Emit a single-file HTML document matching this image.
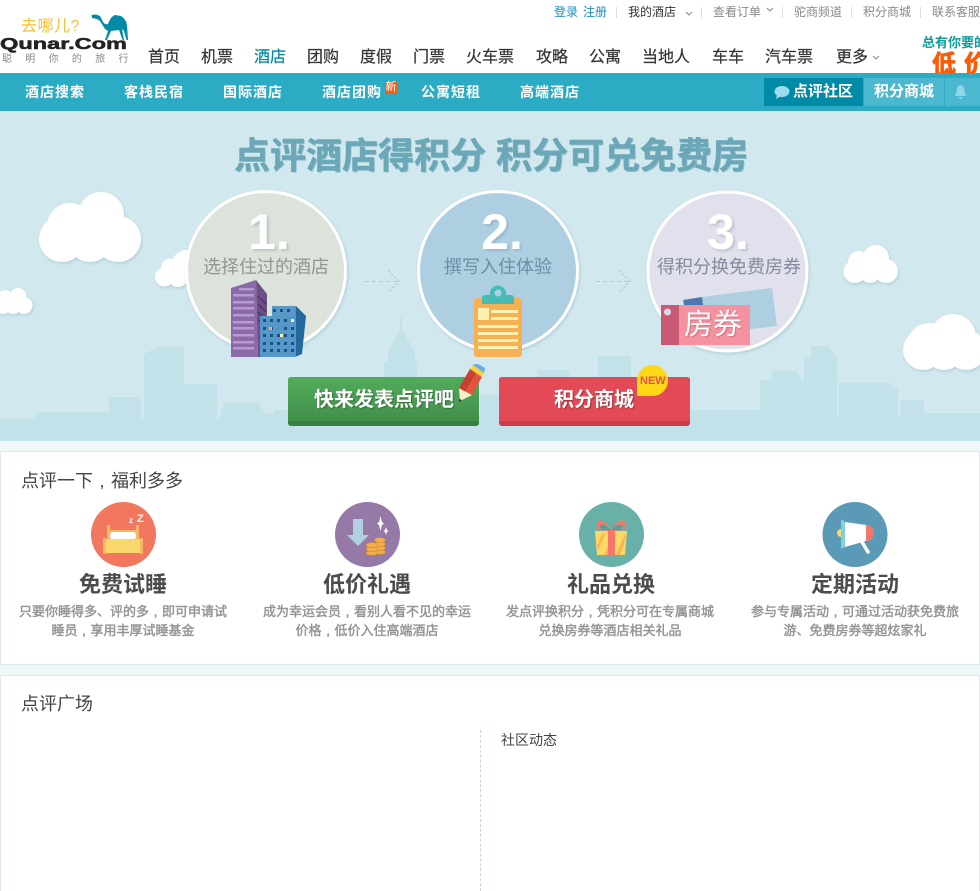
<!DOCTYPE html>
<html lang="zh"><head><meta charset="utf-8"><title>点评酒店</title>
<style>
html,body{margin:0;padding:0;background:#f0f7f9;width:980px;height:891px;overflow:hidden}
#w{position:relative;width:980px;height:891px;overflow:hidden;font-family:"Liberation Sans","WenQuanYi Zen Hei","Noto Sans CJK SC",sans-serif}
.t{position:absolute;white-space:nowrap}
.c{text-align:center}
.n{font-family:"Liberation Sans","Noto Sans CJK SC",sans-serif}
.top{top:5px;font-size:12px;line-height:14px;color:#888}
.sep{position:absolute;top:7px;width:1px;height:11px;background:#ddd}
.nav{top:48px;font-size:16px;line-height:20px;color:#333;font-family:"Liberation Sans","Noto Sans CJK SC",sans-serif;-webkit-text-stroke:.2px #333}
.sub{top:83px;font-size:14px;line-height:18px;color:#fff;font-weight:bold;letter-spacing:1px}
.step{font-size:18px;line-height:24px;top:255px}
.num{font-size:50px;line-height:50px;top:207px;font-weight:bold;color:#fff;text-shadow:2px 2px 2px rgba(120,130,150,.3)}
.h{top:572px;font-size:22px;line-height:26px;font-weight:bold;color:#4c4c4c;width:240px;font-family:"Liberation Sans","Noto Sans CJK SC",sans-serif}
.d{top:602px;font-size:13px;line-height:19px;color:#959595;width:240px;font-family:"Liberation Sans","Noto Sans CJK SC",sans-serif;-webkit-text-stroke:.45px #959595}
.cm{display:inline-block;width:1em;text-align:center}
.panel{position:absolute;left:0;width:978px;background:#fff;border:1px solid #dceaee}
</style></head><body><div id="w">
<div style="position:absolute;left:0;top:0;width:980px;height:73px;background:#fff"></div>

<!-- logo -->
<div class="t" style="left:21px;top:16px;font-size:16px;line-height:22px;color:#fbbf2d;letter-spacing:.5px">去哪儿?</div>
<svg style="position:absolute;left:85px;top:10px" width="50" height="45"><path d="M6.500 5 L11 4.500 L15 6 L18 12 Q20 15 23 14 Q26 6 30 5 L36 6 Q41 9 42 15 L43 30 L41.500 30 L39 21 L37 19 L39 30 L37.500 30 L34 20 L26 21 L22 30 L20 30 L23 21 L20 19 L15 11 L12 9 L7 8 Z" fill="#028aa6"/></svg>
<div class="t" style="left:0;top:34px;font-size:15.500px;line-height:22px;font-weight:bold;color:#222;transform-origin:0 0;transform:scaleX(1.52);-webkit-text-stroke:.5px #222">Qunar.Com</div>
<div class="t" style="left:2px;top:54px;font-size:10px;line-height:12px;color:#888;letter-spacing:13.300px">聪明你的旅行</div>

<!-- top links -->
<div class="t top" style="left:554px;color:#1a8dc0">登录</div>
<div class="t top" style="left:583px;color:#1a8dc0">注册</div>
<div class="sep" style="left:616px"></div>
<div class="t top" style="left:628px;color:#333">我的酒店</div>
<svg style="position:absolute;left:685px;top:11px" width="8" height="6"><path d="M1 1 L4 4 L7 1" fill="none" stroke="#888"/></svg>
<div class="sep" style="left:701px"></div>
<div class="t top" style="left:713px">查看订单</div>
<svg style="position:absolute;left:766px;top:7px" width="8" height="6"><path d="M1 1 L4 4 L7 1" fill="none" stroke="#888"/></svg>
<div class="sep" style="left:782px"></div>
<div class="t top" style="left:794px">驼商频道</div>
<div class="sep" style="left:851px"></div>
<div class="t top" style="left:863px">积分商城</div>
<div class="sep" style="left:920px"></div>
<div class="t top" style="left:932px">联系客服</div>

<!-- nav -->
<div class="t nav" style="left:148px">首页</div>
<div class="t nav" style="left:201px">机票</div>
<div class="t nav" style="left:254px;color:#028aa6;-webkit-text-stroke-color:#028aa6">酒店</div>
<div class="t nav" style="left:307px">团购</div>
<div class="t nav" style="left:360px">度假</div>
<div class="t nav" style="left:413px">门票</div>
<div class="t nav" style="left:466px">火车票</div>
<div class="t nav" style="left:536px">攻略</div>
<div class="t nav" style="left:589px">公寓</div>
<div class="t nav" style="left:642px">当地人</div>
<div class="t nav" style="left:712px">车车</div>
<div class="t nav" style="left:765px">汽车票</div>
<div class="t nav" style="left:836px">更多</div>
<svg style="position:absolute;left:872px;top:55px" width="8" height="6"><path d="M1 1 L4 4 L7 1" fill="none" stroke="#888"/></svg>

<!-- ad -->
<div style="position:absolute;left:900px;top:30px;width:80px;height:43px;overflow:hidden">
<div class="t" style="left:22px;top:5px;font-size:13px;line-height:16px;color:#119c9c;font-weight:bold">总有你要的</div>
<div class="t n" style="left:32px;top:20px;font-size:24px;line-height:30px;color:#fb5c05;font-weight:bold;letter-spacing:8px;-webkit-text-stroke:.8px #fb5c05">低价</div>
</div>

<!-- subnav -->
<div style="position:absolute;left:0;top:73px;width:980px;height:38px;background:#2babc4"></div>
<div class="t sub" style="left:25px">酒店搜索</div>
<div class="t sub" style="left:124px">客栈民宿</div>
<div class="t sub" style="left:223px">国际酒店</div>
<div class="t sub" style="left:322px">酒店团购</div>
<div class="t" style="left:385px;top:81px;width:12px;height:13px;background:#f2600a;color:#fff;font-size:11px;line-height:13px;text-align:center">新</div>
<div class="t sub" style="left:421px">公寓短租</div>
<div class="t sub" style="left:520px">高端酒店</div>
<div style="position:absolute;left:764px;top:78px;width:99px;height:28px;background:#008aa6"></div>
<div style="position:absolute;left:864px;top:78px;width:80px;height:28px;background:#4cb8d0"></div>
<div style="position:absolute;left:945px;top:78px;width:35px;height:28px;background:#4cb8d0"></div>
<svg style="position:absolute;left:773px;top:84px" width="18" height="16"><ellipse cx="9" cy="7.500" rx="7.500" ry="5.500" fill="#9ddcee"/><path d="M4 11 L3 15 L8 12 Z" fill="#9ddcee"/></svg>
<div class="t" style="left:793px;top:83px;font-size:15px;line-height:18px;color:#fff;font-weight:bold">点评社区</div>
<div class="t" style="left:874px;top:83px;font-size:15px;line-height:18px;color:#fff;font-weight:bold">积分商城</div>
<svg style="position:absolute;left:953px;top:84px" width="15" height="16"><path d="M7.500 1 Q11.500 2 11.500 7 Q11.500 10 13.500 12 L1.500 12 Q3.500 10 3.500 7 Q3.500 2 7.500 1 Z M5.500 13 H9.500 Q9 15 7.500 15 Q6 15 5.500 13 Z" fill="#8fd6e6"/></svg>

<!-- hero -->
<svg style="position:absolute;left:0;top:0" width="980" height="441" viewBox="0 0 980 441">
<defs><filter id="s" x="-10%" y="-10%" width="120%" height="125%"><feDropShadow dx="1" dy="1.500" stdDeviation="1.500" flood-color="#7fa7b5" flood-opacity=".4"/></filter>
<linearGradient id="g" x1="0" y1="0" x2="0" y2="1"><stop offset="0" stop-color="#52ab5c"/><stop offset="1" stop-color="#429049"/></linearGradient></defs>
<rect x="0" y="111" width="980" height="330" fill="#d2e8ef"/>
<path fill="#c2e1e8" d="M0 419 H36 V412 H109 V397 H141 V419 H144 V354 L158 347 H184 V384 H217 V419 H219 L224 403 H258 L265 413 H274 V410 H300 V416 H384 V362 H388 V352 L400 330 V318 H402 V330 L415 352 V362 H417 V416 H480 V395 H499 V395 H538 V370 H570 V395 H598 V356 H631 V395 H690 V410 H760 V380 H772 V371 H795 L804 382 V357 H811 V346 H828 L837 357 V418 H839 V383 H891 V387 H898 V418 H900 V400 H924 V413 H980 V441 H0 Z"/>
<!-- clouds -->
<g fill="#fff" filter="url(#s)">
<g><circle cx="62" cy="239" r="23"/><circle cx="90" cy="240" r="22"/><circle cx="118" cy="239" r="23"/><circle cx="101" cy="215" r="23"/><circle cx="70" cy="226" r="23"/></g>
<g><circle cx="3" cy="305.500" r="8.500"/><circle cx="13" cy="305.500" r="8.500"/><circle cx="24" cy="305.500" r="8.500"/><circle cx="18" cy="296.500" r="8.500"/><circle cx="5" cy="298" r="8"/></g>
<g><circle cx="164.500" cy="277" r="9.500"/><circle cx="178" cy="277" r="10"/><circle cx="170" cy="267" r="8.500"/><circle cx="186" cy="264" r="14"/></g>
<g><circle cx="855" cy="271.500" r="11.500"/><circle cx="870" cy="272" r="11"/><circle cx="886" cy="271" r="12"/><circle cx="859" cy="262" r="11"/><circle cx="876" cy="258" r="13"/></g>
<g><circle cx="923" cy="350" r="20"/><circle cx="944" cy="350" r="20"/><circle cx="966" cy="350" r="20"/><circle cx="929" cy="345" r="22"/><circle cx="953" cy="337" r="23"/></g>
</g>
<!-- circles -->
<g filter="url(#s)" stroke="#fff" stroke-width="3">
<circle cx="266" cy="271" r="79.500" fill="#dbe3da"/>
<circle cx="498" cy="271" r="79.500" fill="#aecfe2"/>
<circle cx="727.500" cy="271.500" r="79.500" fill="#e0e1ec"/>
</g>
<!-- arrows -->
<g fill="none" stroke="#a9cdd3" stroke-width="1">
<path d="M365 281.500 H398" stroke-dasharray="4 3"/><path d="M388 270 L399 281.500 L388 293" stroke-dasharray="3 1.500"/>
<path d="M596 281.500 H629" stroke-dasharray="4 3"/><path d="M619 270 L630 281.500 L619 293" stroke-dasharray="3 1.500"/>
</g>
<!-- buildings -->
<path d="M231 288 L256 280 L258 357 H231 Z" fill="#8a6aa8"/>
<path d="M256 280 L267 294 V357 H258 Z" fill="#6b4f86"/>
<g fill="#b79ccb"><rect x="239" y="288" width="15" height="2.500"/><rect x="233" y="294" width="21" height="2.500"/><rect x="233" y="301" width="21" height="2.500"/><rect x="233" y="307" width="21" height="2.500"/><rect x="233" y="314" width="21" height="2.500"/><rect x="233" y="321" width="21" height="2.500"/><rect x="233" y="327" width="21" height="2.500"/><rect x="233" y="334" width="21" height="2.500"/><rect x="233" y="341" width="21" height="2.500"/><rect x="233" y="347" width="21" height="2.500"/></g>
<path d="M258 296 L266 304 M258 304 L266 312 M258 312 L266 320 M258 320 L266 326" stroke="#4d3866" stroke-width="1.500"/>
<path d="M272 306 H296 V317 H272 Z" fill="#5a98c6"/>
<path d="M296 306 L306 316 L302 354 L295 357 Z" fill="#22689c"/>
<path d="M260 316 H296 V357 H260 Z" fill="#5598c8"/>
<g fill="#1d4f8b">
<path d="M263 319h3v3h-3zM270 319h3v3h-3zM277 319h3v3h-3zM284 319h3v3h-3z"/>
<path d="M263 327h3v3h-3zM270 327h3v3h-3zM284 327h3v3h-3zM291 327h3v3h-3z"/>
<path d="M263 334h3v3h-3zM270 334h3v3h-3zM277 334h3v3h-3zM284 334h3v3h-3zM291 334h3v3h-3z"/>
<path d="M263 342h3v3h-3zM270 342h3v3h-3zM277 342h3v3h-3zM284 342h3v3h-3zM291 342h3v3h-3z"/>
<path d="M263 349h3v3h-3zM270 349h3v3h-3zM277 349h3v3h-3zM284 349h3v3h-3zM291 349h3v3h-3z"/>
<path d="M280 309h3v3h-3zM287 309h3v3h-3zM273 309h3v3h-3z"/>
</g>
<path d="M291 319h3v3h-3zM280 334h3v3h-3z" fill="#f8efa0"/><path d="M269 327h3v3h-3z" fill="#f6b155"/>
<!-- clipboard -->
<rect x="474" y="298" width="48" height="59" rx="3" fill="#f6b155"/>
<circle cx="498" cy="293.500" r="8" fill="#46bab5"/>
<path d="M482 304 V298 Q482 295 485 295 H511 Q514 295 514 298 V304 Z" fill="#46bab5"/>
<circle cx="498" cy="293" r="3.500" fill="#aecfe2"/>
<g fill="#fdf0b3"><rect x="478" y="308" width="11" height="12"/><rect x="491" y="310" width="27" height="3"/><rect x="491" y="317" width="27" height="3"/><rect x="478" y="325" width="40" height="3"/><rect x="478" y="332" width="40" height="3"/><rect x="478" y="339" width="40" height="3"/><rect x="478" y="346" width="40" height="3"/></g>
<!-- voucher -->
<path d="M702 297 L772 288 L777 326 L700 335 Z" fill="#aecfe2"/>
<path d="M683 300 L702 297 L703 305 L684 305 Z" fill="#4d78ae"/>
<rect x="661" y="305" width="18" height="40" fill="#c95872"/><rect x="679" y="305" width="71" height="40" fill="#f4939f"/>
<circle cx="667.500" cy="312" r="3.500" fill="#d9dce8"/>
<!-- buttons -->
<rect x="288" y="377" width="191" height="49" rx="3" fill="#3a7f43"/>
<path d="M288 380 Q288 377 291 377 H476 Q479 377 479 380 V421 H288 Z" fill="url(#g)"/>
<rect x="499" y="377" width="191" height="49" rx="3" fill="#c83f49"/>
<path d="M499 380 Q499 377 502 377 H687 Q690 377 690 380 V421 H499 Z" fill="#e24b55"/>
<!-- pencil -->
<path d="M459 388 L472 395 L460 401 Z" fill="#fbeecb"/><path d="M459 402 L459 399 L462 400 Z" fill="#333"/>
<path d="M459 388 L472 395 L482 377 L470 369 Z" fill="#e2553c"/><path d="M459 388 L465 391.500 L476 373 L470 369 Z" fill="#c8412f"/>
<path d="M470 369 L482 377 L484 373 L473 365 Z" fill="#f8cf3c"/>
<path d="M473 365 L484 373 L485 368 L478 364 L474 364 Z" fill="#68aee0"/>
<!-- new -->
<path d="M637 396 V380.500 A15.500 15.500 0 1 1 652.500 396 Z" fill="#ffd815"/>
</svg>

<div class="t n" style="left:234px;top:132px;font-size:36px;line-height:48px;font-weight:bold;color:#6aa8b8;-webkit-text-stroke:.4px #6aa8b8;text-shadow:1px 1px 0 rgba(90,150,170,.5)">点评酒店得积分 积分可兑免费房</div>
<div class="t c num" style="left:189px;width:160px">1.</div>
<div class="t c num" style="left:422px;width:160px">2.</div>
<div class="t c num" style="left:648px;width:160px">3.</div>
<div class="t c step" style="left:166px;width:200px;color:#8f978e">选择住过的酒店</div>
<div class="t c step" style="left:398px;width:200px;color:#6d8da3">撰写入住体验</div>
<div class="t c step" style="left:629px;width:200px;color:#868a9e">得积分换免费房券</div>
<div class="t n" style="left:684px;top:307px;font-size:29px;line-height:36px;color:#fff;text-shadow:1px 1px 1px rgba(150,60,80,.4)">房券</div>
<div class="t n" style="left:314px;top:387px;font-size:20px;line-height:26px;color:#fff;font-weight:bold;text-shadow:1px 1px 1px rgba(0,0,0,.3)">快来发表点评吧</div>
<div class="t n" style="left:554px;top:387px;font-size:20px;line-height:26px;color:#fff;font-weight:bold;text-shadow:1px 1px 1px rgba(0,0,0,.3)">积分商城</div>
<div class="t" style="left:640px;top:375px;font-size:11px;line-height:12px;color:#e2505a;font-weight:bold">NEW</div>

<!-- panel 1 -->
<div class="panel" style="top:451px;height:212px"></div>
<div class="t" style="left:21px;top:470px;font-size:18px;line-height:22px;color:#444">点评一下<span class="cm">,</span>福利多多</div>
<svg style="position:absolute;left:0;top:495px" width="980" height="80" viewBox="0 495 980 80">
<circle cx="123.500" cy="534.500" r="32.500" fill="#f1775f"/>
<rect x="107" y="525" width="3" height="16" fill="#f3b966"/><rect x="136" y="525" width="3" height="16" fill="#f3b966"/><rect x="107" y="530" width="32" height="8" fill="#f3b966"/>
<rect x="110" y="532" width="26" height="8" rx="3" fill="#fff"/>
<rect x="105" y="539" width="36" height="14" fill="#f8d86a"/><rect x="103" y="538" width="3" height="16" fill="#f3b966"/><rect x="140" y="538" width="3" height="16" fill="#f3b966"/>
<text x="129" y="523" font-size="8" font-weight="bold" fill="#fff" font-family="Liberation Sans">z</text><text x="137" y="522" font-size="11" font-weight="bold" fill="#fff" font-family="Liberation Sans">Z</text>

<circle cx="367.500" cy="534.500" r="32.500" fill="#957aa8"/>
<path d="M353 519 H363 V535 H369 L358 546 L347 535 H353 Z" fill="#b3d0e0"/>
<g fill="#f2ae4a" stroke="#c8802a" stroke-width=".5"><ellipse cx="380" cy="552" rx="5.500" ry="2.500"/><ellipse cx="380" cy="548" rx="5.500" ry="2.500"/><ellipse cx="380" cy="544" rx="5.500" ry="2.500"/><ellipse cx="380" cy="540" rx="5.500" ry="2.500"/><ellipse cx="372" cy="553" rx="6" ry="2.500"/><ellipse cx="372" cy="549" rx="6" ry="2.500"/><ellipse cx="372" cy="545" rx="6" ry="2.500"/></g>
<path d="M380.500 516 L382 522 L384 523.500 L382 525 L380.500 531 L379 525 L377 523.500 L379 522 Z M386 527 L387 530 L388.500 531 L387 532 L386 535 L385 532 L383.500 531 L385 530 Z" fill="#fff"/>

<circle cx="611.500" cy="534.500" r="32.500" fill="#69b0a9"/>
<path d="M611 530 C603 518 596 518 597 526 C597 530 603 531 611 531 C619 531 626 530 626 526 C627 518 619 518 611 530 Z" fill="#f6776a"/>
<path d="M611 530 C605 524 600 523 600 527 L602 530 Z M611 530 C617 524 623 523 623 527 L621 530 Z" fill="#46a79f"/>
<path d="M595 531 H627 L625 555 H597 Z" fill="#fbd964"/>
<path d="M597 546 L602 534 H605 L598.500 550 Z M604 555 L613 534 H617 L608 555 Z M616 555 L625 534 L626 538 L620 555 Z" fill="#f9b551"/>
<rect x="608" y="531" width="7" height="24" fill="#f6776a"/>

<circle cx="855" cy="534.500" r="32.500" fill="#5b9ab7"/>
<circle cx="841" cy="533" r="4" fill="#f8d86a"/>
<path d="M841 519 L845 522 V547 L841 549 Z" fill="#7fd0e0"/>
<path d="M862 542 L868 552" stroke="#fff" stroke-width="3.500" stroke-linecap="round"/>
<path d="M845 522 L866 525 V541 L845 547 Z" fill="#fff"/>
<path d="M866 525 A8 8 0 0 1 866 541 Z" fill="#f6776a"/>
</svg>
<div class="t c h" style="left:3px">免费试睡</div>
<div class="t c h" style="left:247px">低价礼遇</div>
<div class="t c h" style="left:491px">礼品兑换</div>
<div class="t c h" style="left:735px">定期活动</div>
<div class="t c d" style="left:3px">只要你睡得多、评的多<span class="cm">,</span>即可申请试<br>睡员<span class="cm">,</span>享用丰厚试睡基金</div>
<div class="t c d" style="left:247px">成为幸运会员<span class="cm">,</span>看别人看不见的幸运<br>价格<span class="cm">,</span>低价入住高端酒店</div>
<div class="t c d" style="left:490px">发点评换积分<span class="cm">,</span>凭积分可在专属商城<br>兑换房券等酒店相关礼品</div>
<div class="t c d" style="left:735px">参与专属活动<span class="cm">,</span>可通过活动获免费旅<br>游、免费房券等超炫家礼</div>

<!-- panel 2 -->
<div class="panel" style="top:675px;height:216px;border-bottom:0"></div>
<div class="t" style="left:21px;top:693px;font-size:18px;line-height:22px;color:#444">点评广场</div>
<div style="position:absolute;left:480px;top:730px;height:161px;border-left:1px dashed #c5d9d6"></div>
<div class="t" style="left:501px;top:731px;font-size:14px;line-height:18px;color:#444">社区动态</div>
</div></body></html>
